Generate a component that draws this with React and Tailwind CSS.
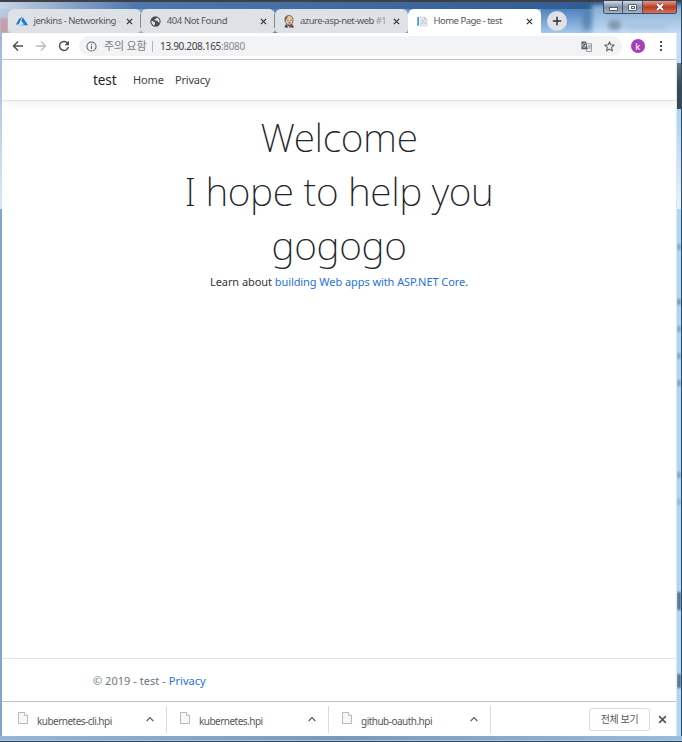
import React from "react";

function Close({ className = "" }) {
  return (
    <svg viewBox="0 0 8 8" className={"shrink-0 " + className}>
      <path d="M1 1l6 6M7 1L1 7" stroke="currentColor" strokeWidth="1.4" fill="none" />
    </svg>
  );
}

function AzureIcon() {
  return (
    <svg viewBox="0 0 12 10" className="h-[10px] w-3">
      <path d="M6.3.4L2.9 3.3 0 8.6h2.6z" fill="#1b76cf" />
      <path d="M6.8 1.2L5.3 5l2.8 3.4-5.4.8H12z" fill="#1080d8" />
    </svg>
  );
}

function GlobeIcon() {
  return (
    <svg viewBox="0 0 12 12" className="h-[11px] w-[11px]">
      <circle cx="6" cy="6" r="5.6" fill="#4b4f54" />
      <path d="M1.6 5.2l3 1.1 1 1.3-.8 2.9C2.400 9.800 1.300 7.500 1.600 5.200zM7.300 1.500l-.6 1.500-1.700.6.400 1.300 2.600.2 1 1.700 1.400.2C10.800 4.500 9.600 2.100 7.300 1.500z" fill="#dee1e6" />
    </svg>
  );
}

function ButlerIcon() {
  return (
    <svg viewBox="0 0 12 13" className="h-[13px] w-3">
      <path d="M1.500 12.500l1-3h7l1.500 3z" fill="#39424a" />
      <path d="M2 5.500C1.500 2 3.500.5 6 .5s4.300 1.700 4 5C9.800 8.500 8.500 10 6.500 10S2.500 8.500 2 5.500z" fill="#e6c5a2" stroke="#4b4540" strokeWidth=".7" />
      <path d="M2 6C1.500 2.500 3 1 5 .8L4 3.500z" fill="#6f655b" />
      <path d="M4.500 5.300h1M7.500 5.300h1M5.500 7.800h2" stroke="#38302b" strokeWidth=".8" />
      <path d="M6 10.500l2-1 1 2-1 .5z" fill="#c83c35" />
      <path d="M3.500 9.500l2 3h2z" fill="#f4f4f4" />
    </svg>
  );
}

function PageIcon() {
  return (
    <svg viewBox="0 0 12 12" className="h-[11px] w-3">
      <path d="M.8 1h1.900v9.500H.8z" fill="#3f9be0" />
      <path d="M4 1h5l2.500 2.500v7.500H4z" fill="#e5e9ec" stroke="#c5ccd1" strokeWidth=".6" />
      <path d="M9 1v2.500h2.500M5 9l2-2.500L8.500 8l1-1L11 9M5.500 5h3" fill="none" stroke="#aeb9c1" strokeWidth=".8" />
    </svg>
  );
}

function Tab({ icon, title, titleClass, active, separator }) {
  return (
    <div className={"relative flex h-6 w-[133.300px] shrink-0 items-center rounded-t-[6px] pl-[8px] pr-[8px] " + (active ? "bg-white" : "rounded-b-[4px] bg-[#dee1e6]")}>
      <span className="flex w-[12px] shrink-0 items-center justify-center">{icon}</span>
      <span className={"ml-[5.500px] shrink-0 whitespace-nowrap text-[9.500px] leading-3 text-[#55585d] " + titleClass}>{title}</span>
      <Close className="ml-auto h-[7px] w-[7px] text-[#303236]" />
      {separator && <span className="absolute right-0 top-[5px] h-[14px] w-px bg-[#85888d]" />}
    </div>
  );
}

function WindowButtons() {
  return (
    <div className="absolute right-[5px] top-px flex h-[13px] w-[74px] overflow-hidden rounded-b-[3px] border border-t-0 border-[#3d4c63]">
      <div className="flex w-[19px] items-center justify-center border-r border-[#44546b] bg-linear-to-b from-[#d1dae5] via-[#8193ac] to-[#a5b4c7]">
        <span className="mt-[3px] h-[4px] w-[9px] border border-[#53616f] bg-white" />
      </div>
      <div className="flex w-[20px] items-center justify-center border-r border-[#44546b] bg-linear-to-b from-[#d1dae5] via-[#8193ac] to-[#a5b4c7]">
        <span className="flex h-[7px] w-[9px] items-center justify-center rounded-[1px] border border-[#53616f] bg-white">
          <span className="h-[3px] w-[4px] border border-[#53616f]" />
        </span>
      </div>
      <div className="flex flex-1 items-center justify-center bg-linear-to-b from-[#df9a8b] via-[#bb3721] to-[#d4745d]">
        <svg viewBox="0 0 10 8" className="h-[8px] w-[10px]">
          <path d="M2 1l6 6M8 1L2 7" stroke="#643b38" strokeWidth="3.200" />
          <path d="M2 1l6 6M8 1L2 7" stroke="#fff" strokeWidth="1.900" />
        </svg>
      </div>
    </div>
  );
}

function TitleBar() {
  return (
    <header className="relative flex h-[33px] overflow-hidden bg-linear-to-r from-[#b8c9df] via-[#4b7eb9] via-45% to-[#b9d7f4] pl-2 pt-[9px]">
      <span className="absolute inset-x-0 top-0 h-[9px] bg-linear-to-r from-[#c8d4e5] via-[#4d78ad] via-20% to-[#2c578c]" />
      <span className="absolute left-[541px] top-[9px] h-[24px] w-[55px] bg-linear-to-b from-[#4f83be] to-[#a5c6ea]" />
      <span className="absolute -right-[4px] top-[5px] h-[32px] w-[94px] bg-linear-to-b from-[#86abd1] to-[#cbe2fa] blur-[2px]" />
      <span className="absolute left-[584px] top-[12px] h-[18px] w-[6px] bg-[#4f77a4] blur-[3px]" />
      <span className="absolute inset-x-0 top-0 h-[2px] bg-[#3d4046]" />
      <span className="absolute left-0 top-[18px] h-[15px] w-[8px] bg-[#c69faa] blur-[1px]" />
      <span className="absolute left-[608px] top-[20px] h-[10px] w-[13px] rounded-full bg-[#8297ad] blur-[2px]" />
      <span className="absolute left-[626px] top-[23px] h-[5px] w-[40px] bg-[#a9c1dc] blur-[2px]" />
      <span className="absolute right-0 top-0 h-[33px] w-px bg-[#354b61]" />
      <Tab icon={<AzureIcon />} title={<>jenkins - Networking <span className="text-[#b5b8be]">-</span></>} titleClass="tracking-[-0.48px]" separator />
      <Tab icon={<GlobeIcon />} title="404 Not Found" titleClass="tracking-[-0.42px]" separator />
      <Tab icon={<ButlerIcon />} title={<>azure-asp-net-web <span className="text-[#96999e]">#1</span></>} titleClass="tracking-[-0.55px]" />
      <Tab icon={<PageIcon />} title="Home Page - test" titleClass="tracking-[-0.5px]" active />
      <span className="relative ml-[6px] mt-[2px] flex h-[20px] w-[20px] items-center justify-center rounded-full bg-[#dee1e6]">
        <svg viewBox="0 0 10 10" className="h-[10px] w-[10px]">
          <path d="M5 .8v8.400M.8 5h8.400" stroke="#303236" strokeWidth="1.500" />
        </svg>
      </span>
      <WindowButtons />
    </header>
  );
}

function Toolbar() {
  return (
    <div className="flex h-[27px] shrink-0 items-center border-b border-[#c4c6c9] bg-white pl-[10px] pr-[10px]">
      <svg viewBox="0 0 12 12" className="h-[12px] w-[12px]">
        <path d="M11 6H1.500M6 1.500L1.500 6 6 10.500" fill="none" stroke="#4d5156" strokeWidth="1.500" />
      </svg>
      <svg viewBox="0 0 12 12" className="ml-[11px] h-[12px] w-[12px]">
        <path d="M1 6h9.500M6 1.500L10.500 6 6 10.500" fill="none" stroke="#babcbe" strokeWidth="1.300" />
      </svg>
      <svg viewBox="0 0 12 12" className="ml-[11px] h-[12px] w-[12px]">
        <path d="M9.900 3.700A4.500 4.500 0 1 0 10.400 7" fill="none" stroke="#4d5156" strokeWidth="1.500" />
        <path d="M11 .8v4.500H6.500z" fill="#4d5156" />
      </svg>
      <div className="ml-[9px] flex h-[20px] w-[543px] items-center rounded-full bg-[#f1f3f4] pl-[7px] pr-[7px] text-[10px] leading-4">
        <svg viewBox="0 0 12 12" className="h-[11px] w-[11px]">
          <circle cx="6" cy="6" r="5" fill="none" stroke="#5f6368" strokeWidth="1.100" />
          <path d="M6 5.200v3.500M6 3v1.200" stroke="#5f6368" strokeWidth="1.200" />
        </svg>
        <span className="ml-[7px] w-[44px] whitespace-nowrap text-[11px] tracking-[-0.2px] text-[#7a7e83]">주의 요함</span>
        <span className="ml-[4px] h-[11px] w-px bg-[#b1b4b8]" />
        <span className="ml-[7px] whitespace-nowrap tracking-[-0.33px] text-[#3b3e42]">13.90.208.165<span className="text-[#85888c]">:8080</span></span>
        <svg viewBox="0 0 12 12" className="ml-auto h-[11px] w-[11px]">
          <path d="M5 3h6.500v8.500H6z" fill="#f1f3f4" stroke="#777b80" strokeWidth=".8" />
          <path d="M.5.5h5l2 8.500h-7z" fill="#55595e" />
          <path d="M5.300 3.600A2 2 0 1 0 5.600 5H4" fill="none" stroke="#fff" strokeWidth=".8" />
          <path d="M7.500 5.500h3.500M9 4.500v1M10.300 5.500c-.3 1.500-1.200 2.500-2.300 3.200M8.300 6.500l2 2.500" fill="none" stroke="#777b80" strokeWidth=".7" />
        </svg>
        <svg viewBox="0 0 12 12" className="ml-[12px] h-[11px] w-[11px]">
          <path d="M6 1l1.500 3.200 3.500.4-2.600 2.400.7 3.600L6 8.800l-3.100 1.800.7-3.600L1 4.600l3.500-.4z" fill="none" stroke="#55595e" strokeWidth="1.100" />
        </svg>
      </div>
      <span className="ml-[8.500px] flex h-[14.500px] w-[14.500px] items-center justify-center rounded-full bg-[#a83cb9] text-[9px] font-medium leading-none text-white">k</span>
      <span className="ml-auto flex w-[10px] flex-col items-center gap-[2px]">
        <i className="h-[2px] w-[2px] bg-[#4d5156]" />
        <i className="h-[2px] w-[2px] bg-[#4d5156]" />
        <i className="h-[2px] w-[2px] bg-[#4d5156]" />
      </span>
    </div>
  );
}

function WebPage() {
  return (
    <div className="flex min-h-0 flex-1 flex-col bg-white text-[#212529]">
      <nav className="flex h-[41px] shrink-0 items-center border-b border-[#e3e4ea] pl-[91px] shadow-[0_3px_8px_rgba(0,0,0,0.05)]">
        <span className="w-[40px] text-[13.500px] leading-5 tracking-[-0.1px]">test</span>
        <span className="w-[42px] text-[11px] leading-4 tracking-[-0.1px] text-[#3b3f43]">Home</span>
        <span className="text-[11px] leading-4 tracking-[-0.2px] text-[#3b3f43]">Privacy</span>
      </nav>
      <main className="flex-1 pt-[9px] text-center">
        <h1 className="text-[39px] font-extralight leading-[54px] tracking-[-0.35px]">Welcome<br />I hope to help you<br />gogogo</h1>
        <p className="mt-[2px] text-[11px] leading-4 tracking-[-0.07px] text-[#303438]">Learn about <a className="text-[#2870e0]">building Web apps with ASP.NET Core</a>.</p>
      </main>
      <footer className="flex h-[43px] shrink-0 items-center border-t border-[#e3e5e8] pl-[91px] pt-px text-[11px] leading-4 tracking-[0.04px] text-[#6c757d]">
        <span className="whitespace-pre">© 2019 - test - <a className="text-[#2870e0]">Privacy</a></span>
      </footer>
    </div>
  );
}

function Download({ name, className }) {
  return (
    <div className={"flex h-[27px] items-center border-r border-[#d8dadd] pr-[12px] " + className}>
      <svg viewBox="0 0 10 12" className="mb-[2px] h-[12px] w-[10px]">
        <path d="M.5.5H6.500l3 3v8H.5z" fill="#f7f7f7" stroke="#a6a8aa" strokeWidth=".8" />
        <path d="M6.500.5v3h3" fill="#fff" stroke="#a6a8aa" strokeWidth=".7" />
      </svg>
      <span className="ml-[9px] mt-[3px] whitespace-nowrap text-[10px] leading-3 tracking-[-0.52px] text-[#55585c]">{name}</span>
      <svg viewBox="0 0 8 6" className="ml-auto h-[6px] w-[8px]">
        <path d="M.7 5L4 1.500 7.300 5" fill="none" stroke="#595d62" strokeWidth="1.200" />
      </svg>
    </div>
  );
}

function DownloadShelf() {
  return (
    <div className="flex h-[35px] shrink-0 items-center border-t border-[#bfc1c4] bg-white pr-[9px]">
      <Download name="kubernetes-cli.hpi" className="w-[165px] pl-[16px]" />
      <Download name="kubernetes.hpi" className="w-[162px] pl-[13px]" />
      <Download name="github-oauth.hpi" className="w-[162px] pl-[13px]" />
      <span className="ml-auto flex h-[23px] w-[61px] items-center justify-center whitespace-nowrap rounded-[3px] border border-[#dadce0] text-[10px] tracking-[-0.4px] text-[#55585c]">전체 보기</span>
      <Close className="ml-[8px] h-[9px] w-[9px] text-[#4d5156]" />
    </div>
  );
}

export default function App() {
  return (
    <div className="flex h-[742px] w-[682px] flex-col overflow-hidden bg-[#354b61] font-['Noto_Sans','Noto_Sans_CJK_KR',sans-serif]">
      <TitleBar />
      <div className="flex min-h-0 flex-1">
        <div className="flex w-[2px] flex-col">
          <span className="h-[176px] bg-linear-to-b from-[#9bb8dc] to-[#dce7f2]" />
          <span className="flex-1 bg-[#83a5c9]" />
        </div>
        <div className="flex w-[674px] flex-col">
          <Toolbar />
          <WebPage />
          <DownloadShelf />
        </div>
        <div className="flex w-[5px] flex-col overflow-hidden border-l border-[#d6eafa] bg-[#afd5f9]">
          <span className="h-[30px] bg-[#c2ddf5]" />
          <span className="h-[46px] bg-linear-to-b from-[#687681] via-[#394854] to-[#394854]" />
          <span className="h-[100px] bg-linear-to-b from-[#acd0f2] to-[#e7f3fc]" />
          <span className="mt-[35px] h-[6px] bg-[#83a9d0] blur-[1px]" />
          <span className="mt-[49px] h-[6px] bg-[#7899b7] blur-[1px]" />
          <span className="mt-[21px] h-[6px] bg-[#83a9d0] blur-[1px]" />
          <span className="mt-[21px] h-[6px] bg-[#83a9d0] blur-[1px]" />
          <span className="mt-[21px] h-[6px] bg-[#7fa2ca] blur-[1px]" />
          <span className="mt-[86px] h-[6px] bg-[#83a4c6] blur-[1px]" />
          <span className="mt-[21px] h-[6px] bg-[#91b8dd] blur-[1px]" />
          <span className="mt-[87px] h-[18px] bg-[#536f8c] blur-[1px]" />
          <span className="mt-[64px] h-[14px] bg-[#536f8c] blur-[1px]" />
        </div>
      </div>
      <div className="h-[4px] shrink-0 bg-linear-to-r from-[#94b6d9] via-[#7899bd] to-[#98bbe0]" />
      <div className="h-[2px] shrink-0 border-t border-[#a8c5dd] bg-[#354657]" />
    </div>
  );
}
